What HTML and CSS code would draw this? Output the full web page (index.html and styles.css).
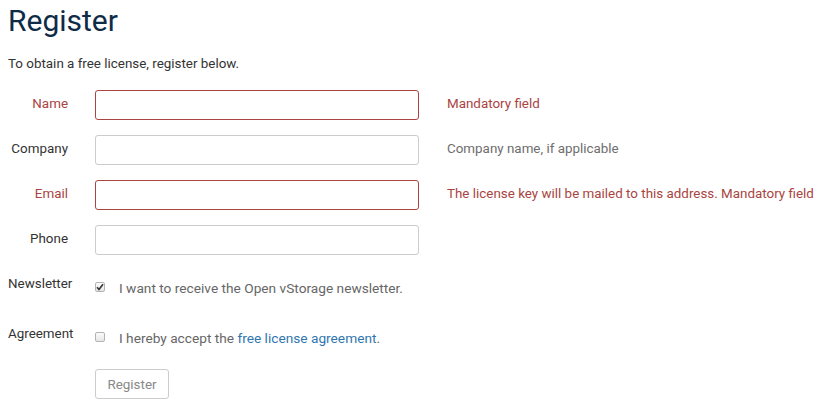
FILE: index.html
```html
<!DOCTYPE html>
<html>
<head>
<meta charset="utf-8">
<link rel="stylesheet" href="styles.css">
</head>
<body>
<h1 class="title">Register</h1>
<p class="intro">To obtain a free license, register below.</p>
<form class="form">
  <div class="row error">
    <label class="label">Name</label>
    <input class="input" type="text">
    <span class="help">Mandatory field</span>
  </div>
  <div class="row">
    <label class="label">Company</label>
    <input class="input" type="text">
    <span class="help">Company name, if applicable</span>
  </div>
  <div class="row error">
    <label class="label">Email</label>
    <input class="input" type="text">
    <span class="help">The license key will be mailed to this address. Mandatory field</span>
  </div>
  <div class="row">
    <label class="label">Phone</label>
    <input class="input" type="text">
  </div>
  <div class="row check-row">
    <label class="label label-left">Newsletter</label>
    <div class="check">
      <span class="box checked"><svg width="8" height="8" viewBox="0 0 8 8"><path d="M1 4.2 L3 6.4 L7 1.2" fill="none" stroke="#333" stroke-width="1.6"/></svg></span>
      <span class="check-text">I want to receive the Open vStorage newsletter.</span>
    </div>
  </div>
  <div class="row check-row second">
    <label class="label label-left">Agreement</label>
    <div class="check">
      <span class="box"></span>
      <span class="check-text">I hereby accept the <a class="link">free license agreement</a>.</span>
    </div>
  </div>
  <div class="row btn-row">
    <span class="label"></span>
    <button class="btn" type="button">Register</button>
  </div>
</form>
</body>
</html>
```
FILE: styles.css
```css
body {
  margin: 0;
  padding: 0 8px;
  font-family: Roboto, "Liberation Sans", sans-serif;
  font-size: 13.4px;
  color: #333;
  background: #fff;
}
.title {
  margin: 0;
  padding-top: 3px;
  font-size: 30px;
  font-weight: 400;
  line-height: 36px;
  color: #0e2b47;
}
.intro {
  margin: 16px 0 0;
  line-height: 18px;
}
.form {
  margin-top: 17px;
}
.row {
  display: flex;
  align-items: center;
  height: 30px;
  margin-bottom: 15px;
}
.label {
  width: 60px;
  flex: none;
  text-align: right;
  margin-right: 27px;
  padding-bottom: 3px;
}
.label-left {
  text-align: left;
  width: 66px;
  margin-right: 21px;
  padding-bottom: 0;
}
.input {
  box-sizing: border-box;
  width: 324px;
  height: 30px;
  border: 1px solid #ccc;
  border-radius: 3px;
  margin: 0;
  flex: none;
}
.help {
  margin-left: 28px;
  color: #6e6e6e;
  white-space: nowrap;
  padding-bottom: 3px;
}
.error .label, .error .help { color: #a94442; }
.error .input { border-color: #a94442; }
.check-row {
  align-items: flex-start;
  height: auto;
  margin-top: 21px;
  margin-bottom: 0;
}
.check-row .label { line-height: 16px; }
.check-row.second { margin-top: 30px; }
.check {
  display: flex;
  align-items: center;
  margin-top: 2px;
}
.box {
  box-sizing: border-box;
  width: 10px;
  height: 10px;
  border: 1px solid #b4b4b4;
  border-radius: 2px;
  background: linear-gradient(#fcfcfc, #e6e6e6);
  display: flex;
  align-items: center;
  justify-content: center;
  margin-right: 14px;
}
.check-text {
  color: #666;
  font-size: 13.7px;
  line-height: 16px;
  padding-top: 2px;
}
.link { color: #2f76b0; }
.btn-row {
  margin-top: 23px;
}
.btn {
  box-sizing: border-box;
  width: 74px;
  height: 30px;
  border: 1px solid #ccc;
  border-radius: 3px;
  background: #fff;
  color: #888;
  font-family: inherit;
  font-size: 13.4px;
  margin-left: 0;
  padding: 0;
}
```
